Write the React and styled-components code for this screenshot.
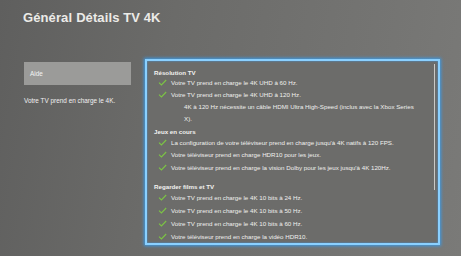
import React from "react";
import styled, { createGlobalStyle } from "styled-components";

const GlobalStyle = createGlobalStyle`
  body {
    margin: 0;
    background: #666;
  }
`;

const Screen = styled.div`
  width: 461px;
  height: 256px;
  box-sizing: border-box;
  padding: 11px 0 0 23px;
  background: linear-gradient(100deg, #5f5f5e 0%, #6b6b69 35%, #747472 75%, #7a7a78 100%);
  font-family: "Liberation Sans", Arial, sans-serif;
  color: #f2f2f2;
  overflow: hidden;
`;

const Title = styled.h1`
  margin: 0;
  font-size: 13px;
  line-height: 14px;
  font-weight: 600;
  letter-spacing: 0.1px;
  color: #ecebe8;

  b {
    font-weight: 700;
    margin-right: 4px;
  }
`;

const Body = styled.div`
  display: flex;
  margin-top: 34px;
`;

const Sidebar = styled.div`
  width: 107px;
  margin-top: 3px;
  margin-left: 1px;
`;

const AideButton = styled.div`
  height: 23px;
  display: flex;
  align-items: center;
  padding-left: 6px;
  background: #9b9b99;
  font-size: 6.4px;
  color: #f4f4f4;
`;

const SideText = styled.p`
  margin: 12px 0 0;
  font-size: 6.4px;
  color: #f0f0f0;
`;

const Panel = styled.div`
  position: relative;
  display: flex;
  flex-direction: column;
  margin-left: 14px;
  width: 295px;
  height: 186px;
  box-sizing: border-box;
  border: 2px solid #8ad0ff;
  box-shadow: 0 0 3px 1px #3b9ae6, inset 0 0 2px #3b9ae6;
  padding: 7px 0 0 7px;
  background: #6c6c6a;
  overflow: hidden;
`;

const ScrollBar = styled.div`
  position: absolute;
  right: 3px;
  top: 3px;
  width: 1px;
  height: 126px;
  background: #c9c9c6;
`;

const Section = styled.section`
  display: flex;
  flex-direction: column;
  flex: none;
  margin-top: ${(p) => p.$top || 0}px;
`;

const SectionTitle = styled.h2`
  margin: 0;
  height: ${(p) => p.$h || 8}px;
  display: flex;
  align-items: center;
  font-size: 6.2px;
  font-weight: 700;
  color: #f2f2f0;
`;

const Row = styled.div`
  display: flex;
  align-items: center;
  flex: none;
  height: ${(p) => p.$h || 12}px;
  padding-left: 4px;
  font-size: 6.2px;
  color: #f0f0ee;
  white-space: nowrap;

  svg {
    flex: none;
    margin-right: 4px;
  }
`;

const Note = styled.div`
  display: flex;
  flex-direction: column;
  justify-content: center;
  height: 24px;
  padding-left: 30px;
  font-size: 6.2px;
  color: #efefed;
  white-space: nowrap;

  span {
    height: 12px;
    display: flex;
    align-items: center;
  }
`;

const Check = () => (
  <svg width="9" height="7" viewBox="0 0 9 7">
    <path d="M1 3.6 L3.4 6 L8.2 1" fill="none" stroke="#7cc444" strokeWidth="1.1" />
  </svg>
);

const Item = ({ children, h }) => (
  <Row $h={h}>
    <Check />
    <span>{children}</span>
  </Row>
);

export default function App() {
  return (
    <>
      <GlobalStyle />
      <Screen>
        <Title>
          <b>Général</b>Détails TV 4K
        </Title>
        <Body>
          <Sidebar>
            <AideButton>Aide</AideButton>
            <SideText>Votre TV prend en charge le 4K.</SideText>
          </Sidebar>
          <Panel>
            <ScrollBar />
            <Section>
              <SectionTitle $h={8}>Résolution TV</SectionTitle>
              <Item>Votre TV prend en charge le 4K UHD à 60 Hz.</Item>
              <Item>Votre TV prend en charge le 4K UHD à 120 Hz.</Item>
              <Note>
                <span>4K à 120 Hz nécessite un câble HDMI Ultra High-Speed (inclus avec la Xbox Series</span>
                <span>X).</span>
              </Note>
            </Section>
            <Section $top={2}>
              <SectionTitle $h={10}>Jeux en cours</SectionTitle>
              <Item h={12.5}>La configuration de votre téléviseur prend en charge jusqu'à 4K natifs à 120 FPS.</Item>
              <Item h={12.5}>Votre téléviseur prend en charge HDR10 pour les jeux.</Item>
              <Item h={12.5}>Votre téléviseur prend en charge la vision Dolby pour les jeux jusqu'à 4K 120Hz.</Item>
            </Section>
            <Section $top={8.5}>
              <SectionTitle $h={9}>Regarder films et TV</SectionTitle>
              <Item h={12.9}>Votre TV prend en charge le 4K 10 bits à 24 Hz.</Item>
              <Item h={12.9}>Votre TV prend en charge le 4K 10 bits à 50 Hz.</Item>
              <Item h={12.9}>Votre TV prend en charge le 4K 10 bits à 60 Hz.</Item>
              <Item h={12.9}>Votre téléviseur prend en charge la vidéo HDR10.</Item>
            </Section>
          </Panel>
        </Body>
      </Screen>
    </>
  );
}
